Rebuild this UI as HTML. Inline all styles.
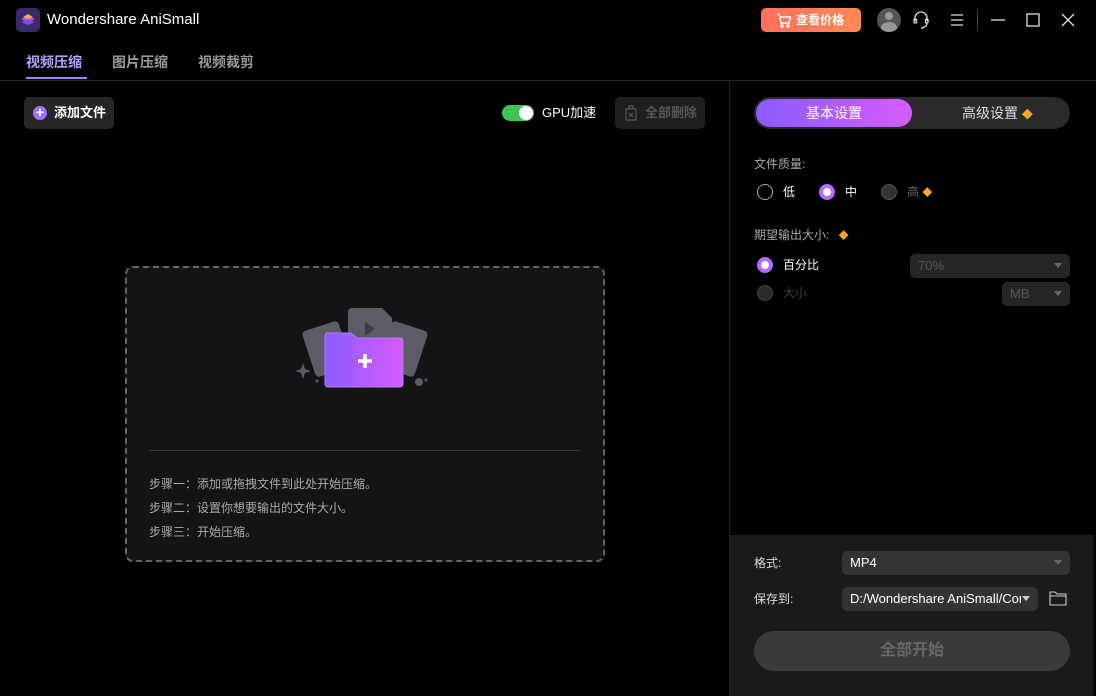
<!DOCTYPE html>
<html><head><meta charset="utf-8"><style>
*{margin:0;padding:0;box-sizing:border-box}
body{width:1096px;height:696px;background:#000;font-family:"Liberation Sans","Noto Sans CJK SC",sans-serif;color:#ddd;position:relative;overflow:hidden;font-size:13px;line-height:1.1}
.a{position:absolute}
.sel{position:absolute;background:#262626;border-radius:5px;color:#555;font-size:13px;padding-left:8px;line-height:24px}
.sel.ar:after{content:"";position:absolute;right:8px;top:9px;border:4px solid transparent;border-top:5px solid #666}
.rad{position:absolute;width:16px;height:16px;border-radius:50%}
</style></head><body>
<!-- title bar -->
<div class="a" style="left:16px;top:8px;width:24px;height:24px;border-radius:5px;background:#3a2a6a"></div>
<svg class="a" style="left:18px;top:10px" width="20" height="20" viewBox="0 0 20 20"><path d="M10 12 L17 9 L10 6 L3 9Z" fill="#b060f0"/><path d="M10 15 L17 12 L10 9.5 L3 12Z" fill="#8a48e8"/><path d="M10 9 L15 7 L10 4 L5 7Z" fill="#f7a74a"/></svg>
<div class="a" style="left:47px;top:12px;font-size:15px;color:#fff">Wondershare AniSmall</div>
<div class="a" style="left:761px;top:8px;width:100px;height:24px;border-radius:5px;background:linear-gradient(90deg,#ff6e60,#ff8a52);color:#fff;font-size:12px;font-weight:bold;line-height:24px;padding-left:35px">查看价格</div>
<svg class="a" style="left:776px;top:13px" width="16" height="15" viewBox="0 0 16 15" fill="none" stroke="#fff" stroke-width="1.4"><path d="M1 1h2l2 9h8l1.5-6H4"/><circle cx="6" cy="13" r="1"/><circle cx="12" cy="13" r="1"/></svg>
<div class="a" style="left:877px;top:8px;width:24px;height:24px;border-radius:50%;background:#555;overflow:hidden"><div class="a" style="left:8px;top:4px;width:8px;height:8px;border-radius:50%;background:#999"></div><div class="a" style="left:4px;top:14px;width:16px;height:12px;border-radius:50%;background:#999"></div></div>
<svg class="a" style="left:912px;top:10px" width="18" height="20" viewBox="0 0 18 20" fill="none" stroke="#ddd" stroke-width="1.3"><path d="M3 11V8a6 6 0 0 1 12 0v3"/><rect x="2" y="9" width="2.5" height="4" rx="1"/><rect x="13.5" y="9" width="2.5" height="4" rx="1"/><path d="M15 13c0 3-3 5-6 5"/></svg>
<svg class="a" style="left:950px;top:13px" width="14" height="14" stroke="#ddd" stroke-width="1.3"><path d="M1 2h12M1 7h12M1 12h12"/></svg>
<div class="a" style="left:977px;top:9px;width:1px;height:22px;background:#444"></div>
<svg class="a" style="left:990px;top:10px" width="90" height="20" fill="none" stroke="#ddd" stroke-width="1.3"><path d="M1 10h14"/><rect x="37" y="4" width="12" height="12"/><path d="M72 4l12 12M84 4L72 16"/></svg>
<!-- tabs -->
<div class="a" style="left:26px;top:55px;font-size:14px;font-weight:bold;color:#b9a2ff">视频压缩</div>
<div class="a" style="left:26px;top:77px;width:61px;height:2px;background:#a97cff"></div>
<div class="a" style="left:112px;top:55px;font-size:14px;font-weight:bold;color:#999">图片压缩</div>
<div class="a" style="left:198px;top:55px;font-size:14px;font-weight:bold;color:#999">视频裁剪</div>
<div class="a" style="left:0;top:80px;width:1096px;height:1px;background:#2a2a2a"></div>
<!-- toolbar -->
<div class="a" style="left:24px;top:97px;width:90px;height:32px;border-radius:5px;background:#262626;color:#fff;font-weight:bold;line-height:32px;padding-left:30px">添加文件</div>
<div class="a" style="left:33px;top:106px;width:14px;height:14px;border-radius:50%;background:#a070ff;color:#fff;font-size:14px;line-height:13px;text-align:center;font-weight:bold">+</div>
<div class="a" style="left:502px;top:105px;width:32px;height:16px;border-radius:8px;background:#3fc45a"><div class="a" style="left:17px;top:1px;width:14px;height:14px;border-radius:50%;background:#fff"></div></div>
<div class="a" style="left:542px;top:106px;font-size:13px;color:#fff">GPU加速</div>
<div class="a" style="left:615px;top:97px;width:90px;height:32px;border-radius:5px;background:#1e1e1e;color:#555;font-weight:bold;line-height:32px;padding-left:30px">全部删除</div>
<svg class="a" style="left:624px;top:105px" width="14" height="16" fill="none" stroke="#555" stroke-width="1.2"><path d="M2 4h10v11H2zM5 4V1h4v3M5 8l4 4M9 8l-4 4"/></svg>
<!-- drop zone -->
<div class="a" style="left:125px;top:266px;width:480px;height:296px;border:2px dashed #666;border-radius:8px;background:#141414"></div>
<svg class="a" style="left:290px;top:300px" width="150" height="95" viewBox="0 0 150 95">
<g fill="#5d5c66"><rect x="18" y="25" width="38" height="48" rx="4" transform="rotate(-18 37 49)"/><rect x="94" y="25" width="38" height="48" rx="4" transform="rotate(18 113 49)"/><path d="M62 8h30l10 10v40H58V12a4 4 0 0 1 4-4z"/></g>
<path d="M75 22v14l10-7z" fill="#3c3b44"/>
<path d="M36 33h25l6 5h43a3 3 0 0 1 3 3v43a3 3 0 0 1-3 3H38a3 3 0 0 1-3-3V36z" fill="url(#g)" stroke="#b07aff"/>
<defs><linearGradient id="g"><stop offset="0" stop-color="#8a5cff"/><stop offset="1" stop-color="#d65cff"/></linearGradient></defs>
<path d="M75 54v14M68 61h14" stroke="#fff" stroke-width="3.5"/>
<path d="M13 63l2 6 6 2-6 2-2 6-2-6-6-2 6-2z" fill="#5d5c66"/><circle cx="129" cy="82" r="4" fill="#5d5c66"/><circle cx="27" cy="81" r="1.5" fill="#5d5c66"/><path d="M136 78v4M134 80h4" stroke="#5d5c66"/>
</svg>
<div class="a" style="left:149px;top:450px;width:431px;height:1px;background:#3a3a3a"></div>
<div class="a" style="left:149px;top:472px;font-size:12px;color:#aaa;line-height:24px">步骤一：添加或拖拽文件到此处开始压缩。<br>步骤二：设置你想要输出的文件大小。<br>步骤三：开始压缩。</div>
<!-- right panel -->
<div class="a" style="left:729px;top:81px;width:1px;height:615px;background:#222"></div>
<div class="a" style="left:754px;top:97px;width:316px;height:32px;border-radius:16px;background:#2a2a2a"></div>
<div class="a" style="left:756px;top:99px;width:156px;height:28px;border-radius:14px;background:linear-gradient(90deg,#8a5cff,#d65cff);color:#fff;font-size:14px;text-align:center;line-height:28px">基本设置</div>
<div class="a" style="left:962px;top:106px;font-size:14px;color:#ddd">高级设置 <span style="color:#f5a623;font-size:11px">◆</span></div>
<div class="a" style="left:754px;top:158px;font-size:12px;color:#aaa">文件质量:</div>
<div class="rad" style="left:757px;top:184px;border:1px solid #aaa"></div><div class="a" style="left:783px;top:186px;color:#fff;font-size:12px">低</div>
<div class="rad" style="left:819px;top:184px;border:4px solid #b06aff;background:#fff"></div><div class="a" style="left:845px;top:186px;color:#fff;font-size:12px">中</div>
<div class="rad" style="left:881px;top:184px;background:#333;border:1px solid #555"></div><div class="a" style="left:907px;top:186px;color:#666;font-size:12px">高 <span style="color:#f5a623;font-size:10px">◆</span></div>
<div class="a" style="left:754px;top:229px;font-size:12px;color:#aaa">期望输出大小: <span style="color:#f5a623;font-size:10px;margin-left:6px">◆</span></div>
<div class="rad" style="left:757px;top:257px;border:4px solid #b06aff;background:#fff"></div><div class="a" style="left:783px;top:259px;color:#fff;font-size:12px">百分比</div>
<div class="rad" style="left:757px;top:285px;background:#2a2a2a;border:1px solid #444"></div><div class="a" style="left:783px;top:287px;color:#444;font-size:12px">大小</div>
<div class="sel ar" style="left:910px;top:254px;width:160px">70%</div>
<div class="sel" style="left:910px;top:282px;width:88px;padding:0"></div>
<div class="sel ar" style="left:1002px;top:282px;width:68px">MB</div>
<div class="a" style="left:730px;top:535px;width:364px;height:161px;background:#1a1a1a"></div>
<div class="a" style="left:754px;top:557px;font-size:12px;color:#ddd">格式:</div>
<div class="sel ar" style="left:842px;top:551px;width:228px;background:#333;color:#fff;line-height:24px">MP4</div>
<div class="a" style="left:754px;top:593px;font-size:12px;color:#ddd">保存到:</div>
<div class="sel" style="left:842px;top:587px;width:196px;background:#333;color:#fff;line-height:24px;white-space:nowrap;overflow:hidden"><div style="width:171px;overflow:hidden">D:/Wondershare AniSmall/Compressed</div></div>
<div class="a" style="left:1022px;top:596px;border:4px solid transparent;border-top:5px solid #ccc"></div>
<svg class="a" style="left:1049px;top:590px" width="18" height="16" fill="none" stroke="#ccc" stroke-width="1.1"><path d="M1 2h5l2 2h9v11H1zM1 6h16"/></svg>
<div class="a" style="left:754px;top:631px;width:316px;height:40px;border-radius:20px;background:#3a3a3a;color:#666;font-size:16px;font-weight:bold;text-align:center;line-height:40px">全部开始</div>
</body></html>
